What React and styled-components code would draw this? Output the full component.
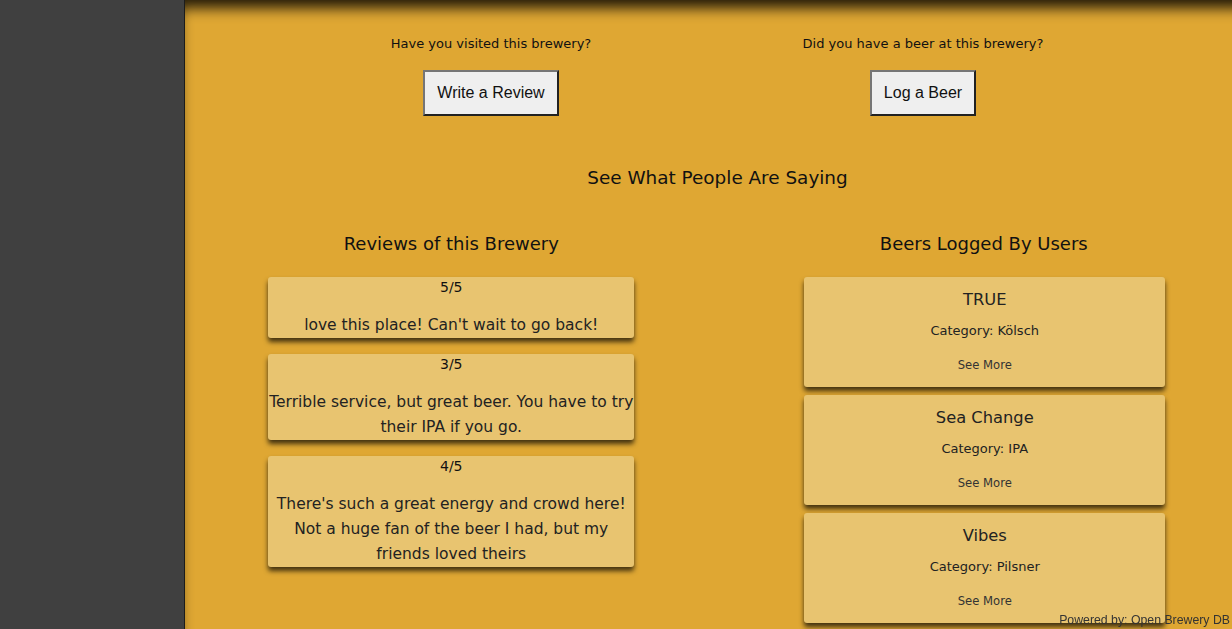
import styled, { createGlobalStyle } from "styled-components";

const GlobalStyle = createGlobalStyle`
  html, body {
    margin: 0;
    padding: 0;
    overflow: hidden;
  }
  body {
    font-family: "DejaVu Sans", "Noto Sans", sans-serif;
    color: #111;
  }
`;

const reviews = [
  { rating: "5/5", text: "love this place! Can't wait to go back!" },
  {
    rating: "3/5",
    text: "Terrible service, but great beer. You have to try their IPA if you go.",
  },
  {
    rating: "4/5",
    text: "There's such a great energy and crowd here! Not a huge fan of the beer I had, but my friends loved theirs",
  },
];

const beers = [
  { name: "TRUE", category: "Kölsch" },
  { name: "Sea Change", category: "IPA" },
  { name: "Vibes", category: "Pilsner" },
];

const App = () => {
  return (
    <Page>
      <GlobalStyle />
      <Sidebar />
      <Main>
        <Prompts>
          <Prompt>
            <Question>Have you visited this brewery?</Question>
            <ActionButton>Write a Review</ActionButton>
          </Prompt>
          <Prompt>
            <Question>Did you have a beer at this brewery?</Question>
            <ActionButton>Log a Beer</ActionButton>
          </Prompt>
        </Prompts>
        <SectionTitle>See What People Are Saying</SectionTitle>
        <Columns>
          <Column>
            <ColumnTitle>Reviews of this Brewery</ColumnTitle>
            <List gap={16}>
              {reviews.map((r, i) => (
                <ReviewCard key={i}>
                  <Rating>{r.rating}</Rating>
                  <ReviewText>{r.text}</ReviewText>
                </ReviewCard>
              ))}
            </List>
          </Column>
          <Column>
            <ColumnTitle>Beers Logged By Users</ColumnTitle>
            <List gap={8}>
              {beers.map((b, i) => (
                <BeerCard key={i}>
                  <BeerName>{b.name}</BeerName>
                  <BeerCategory>Category: {b.category}</BeerCategory>
                  <SeeMore>See More</SeeMore>
                </BeerCard>
              ))}
            </List>
          </Column>
        </Columns>
      </Main>
      <Footer>Powered by: Open Brewery DB</Footer>
    </Page>
  );
};

const Page = styled.div`
  display: flex;
  height: 100vh;
  width: 100vw;
  overflow: hidden;
`;

const Sidebar = styled.aside`
  flex: 0 0 184px;
  background: #404040;
  border-right: 1px solid #1c1c1c;
`;

const Main = styled.main`
  flex: 0 0 1065px;
  background: #dfa733;
  box-shadow: inset 0 14px 14px -6px rgba(0, 0, 0, 0.85);
  padding-top: 34px;
  box-sizing: border-box;
`;

const Prompts = styled.div`
  display: grid;
  grid-template-columns: 432px 432px;
  padding-left: 90px;
`;

const Prompt = styled.div`
  display: flex;
  flex-direction: column;
  align-items: center;
  gap: 16px;
`;

const Question = styled.p`
  margin: 0;
  font-size: 13px;
  line-height: 20px;
  font-weight: 500;
`;

const ActionButton = styled.button`
  font-family: "Liberation Sans", Arial, sans-serif;
  font-size: 16px;
  line-height: 18px;
  padding: 12px 12px;
  background: #efefef;
  color: #111;
  border: 2px solid;
  border-color: #767676 #222 #222 #767676;
  cursor: pointer;
`;

const SectionTitle = styled.h2`
  margin: 47px 0 0;
  text-align: center;
  font-size: 18.4px;
  line-height: 30px;
  font-weight: 500;
`;

const Columns = styled.div`
  display: grid;
  grid-template-columns: 1fr 1fr;
  margin-top: 37px;
`;

const Column = styled.section`
  display: flex;
  flex-direction: column;
  align-items: center;
`;

const ColumnTitle = styled.h3`
  margin: 0 0 19px;
  font-size: 18px;
  line-height: 28px;
  font-weight: 500;
`;

const List = styled.div`
  display: flex;
  flex-direction: column;
  gap: ${(p) => p.gap}px;
`;

const Card = styled.div`
  background: #e8c470;
  border-radius: 3px;
  box-shadow: 0 4px 5px rgba(0, 0, 0, 0.7);
  text-align: center;
  color: #222;
`;

const ReviewCard = styled(Card)`
  width: 366px;
`;

const Rating = styled.div`
  font-size: 14px;
  line-height: 20px;
  font-weight: 500;
  color: #111;
`;

const ReviewText = styled.p`
  margin: 16px 0 0;
  font-size: 15.5px;
  line-height: 25px;
`;

const BeerCard = styled(Card)`
  width: 361px;
  height: 110px;
  box-sizing: border-box;
  padding-top: 11px;
  margin-left: 2px;
  display: flex;
  flex-direction: column;
  align-items: center;
`;

const BeerName = styled.div`
  font-size: 16.3px;
  line-height: 24px;
`;

const BeerCategory = styled.div`
  margin-top: 8px;
  font-size: 13px;
  line-height: 21px;
  font-weight: 500;
`;

const SeeMore = styled.div`
  margin-top: 15px;
  font-size: 11.6px;
  line-height: 18px;
  color: #333;
`;

const Footer = styled.footer`
  position: fixed;
  right: 2px;
  bottom: 2px;
  font-family: "Liberation Sans", Arial, sans-serif;
  font-size: 12.3px;
  color: #333;
`;

export default App;
